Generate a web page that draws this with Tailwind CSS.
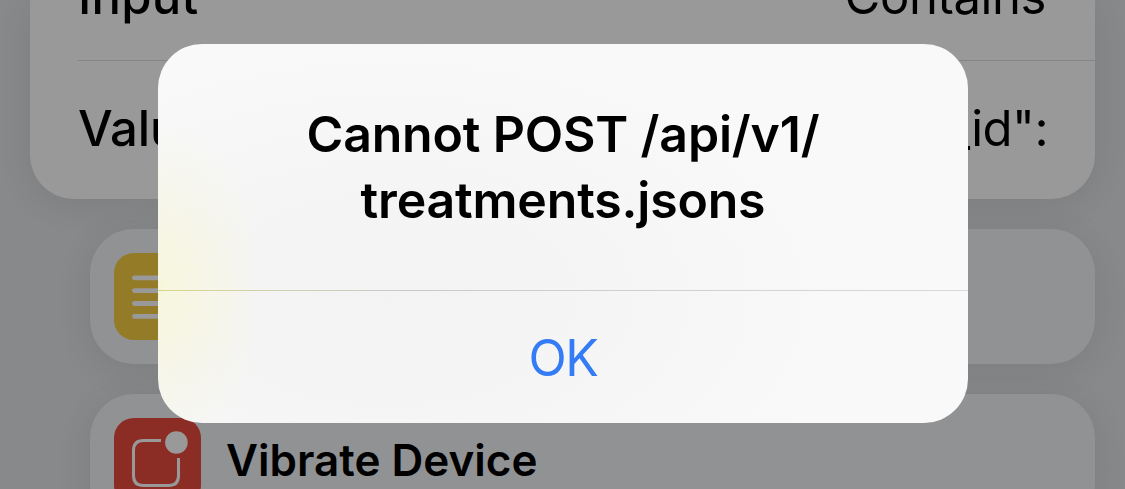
<!DOCTYPE html>
<html lang="en">
<head>
<meta charset="utf-8">
<title>Shortcut</title>
<script src="https://cdn.jsdelivr.net/npm/@tailwindcss/browser@4"></script>
</head>
<body class="relative h-[489px] w-[1125px] overflow-hidden bg-[#88898b] font-['Inter',sans-serif] text-black">
<main class="flex h-[489px] flex-col gap-[30px] overflow-hidden pl-[30px] pr-[30px]">
  <section class="flex h-[199px] shrink-0 flex-col rounded-b-[44px] bg-[#999999] pl-12 text-[49px] leading-[60px] shadow-[0_6px_36px_rgba(0,0,0,0.09)]">
    <div class="flex h-[61px] shrink-0 items-end justify-between border-b border-[#858587] pr-[49px]">
      <span class="mb-[33px] h-[60px] font-medium tracking-[0.2px]">Input</span>
      <span class="mb-[33px] h-[60px] tracking-[-0.4px]">Contains</span>
    </div>
    <div class="flex h-[138px] items-center justify-between pr-[47px] pb-[3px]">
      <span class="font-medium tracking-[-0.1px]">Value</span>
      <span class="tracking-[-0.5px]">"_id":</span>
    </div>
  </section>
  <section class="ml-[60px] flex h-[135px] shrink-0 items-center rounded-[44px] bg-[#919294] px-6 shadow-[0_6px_36px_rgba(0,0,0,0.09)]">
    <svg class="size-[87px]" viewBox="0 0 87 87" fill="none">
      <rect width="87" height="87" rx="20" fill="#937b27"/>
      <path d="M20.4 24.8H66.6M20.4 37.6H66.6M20.4 50.5H66.6M20.4 63.4H66.6" stroke="#999" stroke-width="4.8" stroke-linecap="round"/>
    </svg>
  </section>
  <section class="ml-[60px] flex h-[135px] shrink-0 items-center gap-[25px] rounded-[44px] bg-[#919294] px-6 shadow-[0_6px_36px_rgba(0,0,0,0.09)]">
    <svg class="size-[87px]" viewBox="0 0 87 87" fill="none">
      <rect width="87" height="87" rx="20" fill="#8b2c25"/>
      <path d="M47 22.5H29.5Q19.5 22.5 19.5 32.5V57.5Q19.5 67.5 29.5 67.5H54.5Q64.5 67.5 64.5 57.5V40" stroke="#999" stroke-width="3"/>
      <circle cx="62.4" cy="24.5" r="11.3" fill="#999"/>
    </svg>
    <span class="pb-[3px] text-[44px] leading-[54px] font-semibold tracking-[0px]">Vibrate Device</span>
  </section>
</main>
<div role="alertdialog" class="absolute top-[44px] left-[158px] flex h-[379px] w-[810px] flex-col overflow-hidden rounded-[44px] bg-[#f9f9f9] bg-[radial-gradient(ellipse_110px_170px_at_0px_245px,#f7f6dc_0%,rgba(247,246,225,0.65)_45%,rgba(247,247,240,0)_100%),radial-gradient(ellipse_460px_260px_at_230px_255px,#f3f3f4_0%,rgba(244,244,245,0.85)_40%,rgba(249,249,249,0)_100%)]">
  <h1 class="flex h-[246px] shrink-0 flex-col items-center pt-[57px] text-[50px] leading-[66px] font-semibold tracking-[-0.18px]">
    <span>Cannot POST /api/v1/</span>
    <span>treatments.jsons</span>
  </h1>
  <div class="h-px shrink-0 bg-linear-to-r from-[#d8d58b] via-[#c9c9cb] via-30% to-[#d9d9da]"></div>
  <button class="flex flex-1 items-center justify-center pt-[3px] text-[50px] tracking-[-1.3px] text-[#347bf6]">OK</button>
</div>
</body>
</html>
